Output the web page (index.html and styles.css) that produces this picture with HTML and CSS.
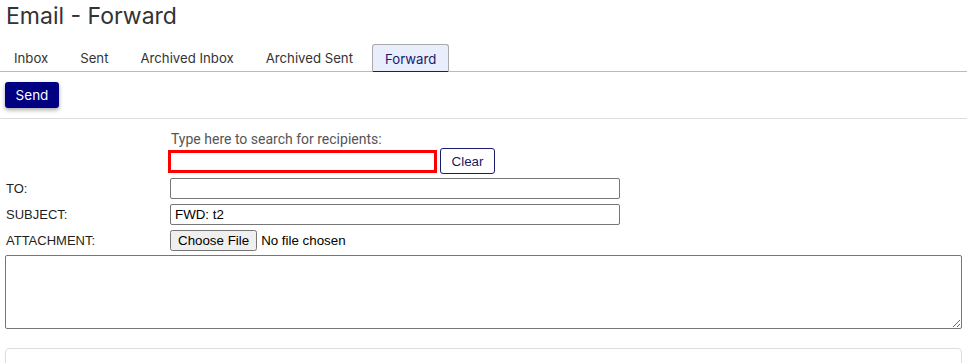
FILE: index.html
```html
<!DOCTYPE html>
<html>
<head>
<meta charset="utf-8">
<title>Email - Forward</title>
<link rel="stylesheet" href="styles.css">
</head>
<body>
<div class="page">
  <h1 class="title">Email - Forward</h1>
  <nav class="tabs">
    <a class="tab">Inbox</a>
    <a class="tab">Sent</a>
    <a class="tab">Archived Inbox</a>
    <a class="tab">Archived Sent</a>
    <a class="tab tab-active">Forward</a>
  </nav>
  <div class="toolbar">
    <button class="btn-send" type="button">Send</button>
  </div>
  <form class="compose">
    <div class="row row-hint">
      <span class="label"></span>
      <span class="hint">Type here to search for recipients:</span>
    </div>
    <div class="row row-search">
      <span class="label"></span>
      <input class="search-input" type="text">
      <button class="btn-clear" type="button">Clear</button>
    </div>
    <div class="row row-field">
      <label class="label">TO:</label>
      <input class="text-input" type="text">
    </div>
    <div class="row row-field">
      <label class="label">SUBJECT:</label>
      <input class="text-input" type="text" value="FWD: t2">
    </div>
    <div class="row row-field">
      <label class="label">ATTACHMENT:</label>
      <input class="file-input" type="file">
    </div>
    <textarea class="body-text"></textarea>
  </form>
  <div class="panel"></div>
</div>
</body>
</html>
```
FILE: styles.css
```css
html, body {
  margin: 0;
  padding: 0;
  background: #fff;
}
body {
  font-family: Inter, "Noto Sans", sans-serif;
  color: #333;
}
.page {
  padding: 0 5px;
}
.title {
  margin: 0;
  padding-left: 1px;
  font-size: 23px;
  font-weight: 400;
  line-height: 32px;
  color: #333;
}
.tabs {
  display: flex;
  gap: 6px;
  margin: 12px -5px 0;
  padding-left: 1px;
  border-bottom: 1px solid #bbb;
  height: 27px;
}
.tab {
  display: flex;
  align-items: center;
  padding: 0 12px;
  font-size: 13.2px;
  color: #333;
  height: 27px;
  box-sizing: border-box;
  border: 1px solid transparent;
  border-bottom: none;
}
.tab-active {
  background: #e8eefc;
  border-color: #aaa;
  border-radius: 3px 3px 0 0;
  color: #1a1a6e;
  box-shadow: inset 0 -1px 0 #1a1a6e;
  height: 28px;
}
.toolbar {
  padding: 10px 0 10px;
  border-bottom: 1px solid #ddd;
  margin: 0 -5px;
  padding-left: 5px;
}
.btn-send {
  display: block;
  height: 26px;
  width: 54px;
  padding: 0;
  border: none;
  border-radius: 3px;
  background: #000080;
  color: #fff;
  font-family: Inter, sans-serif;
  font-size: 13.5px;
  box-shadow: 0 2px 4px rgba(0, 0, 0, 0.35);
}
.compose {
  margin: 0;
  padding-top: 12px;
}
.row {
  display: flex;
  align-items: center;
}
.label {
  width: 164px;
  padding-left: 1px;
  flex: none;
  font-family: "Liberation Sans", Arial, sans-serif;
  font-size: 13px;
  color: #1f1f1f;
}
.hint {
  font-family: Roboto, sans-serif;
  font-size: 14px;
  line-height: 16px;
  color: #555;
  padding-left: 1px;
}
.row-search {
  margin-top: 1px;
}
.search-input {
  width: 269px;
  height: 23px;
  box-sizing: border-box;
  margin: 0 0 0 -2px;
  border: 3px solid #f00;
  border-radius: 0;
  outline: none;
}
.btn-clear {
  margin-left: 3px;
  height: 26px;
  width: 55px;
  box-sizing: border-box;
  background: #fff;
  border: 1px solid #1a1a6e;
  border-radius: 3px;
  color: #1a1a5e;
  font-family: "Liberation Sans", Arial, sans-serif;
  font-size: 13.333px;
  padding: 0;
}
.row-field {
  margin-top: 4px;
}
.row-field + .row-field {
  margin-top: 5px;
}
.text-input {
  width: 450px;
  height: 21px;
  box-sizing: border-box;
  margin: 0;
  border: 1px solid #767676;
  border-radius: 2px;
  padding: 1px 4px;
  font-family: "Liberation Sans", Arial, sans-serif;
  font-size: 13.333px;
  color: #000;
}
.file-input {
  margin: 0;
  height: 21px;
  font-family: "Liberation Sans", Arial, sans-serif;
  font-size: 13.333px;
  color: #000;
}
.body-text {
  display: block;
  width: 100%;
  height: 74px;
  box-sizing: border-box;
  margin: 4px 0 0;
  border: 1px solid #767676;
  border-radius: 2px;
  resize: both;
}
.panel {
  margin-top: 19px;
  height: 60px;
  border: 1px solid #ddd;
  border-radius: 4px;
}
```
